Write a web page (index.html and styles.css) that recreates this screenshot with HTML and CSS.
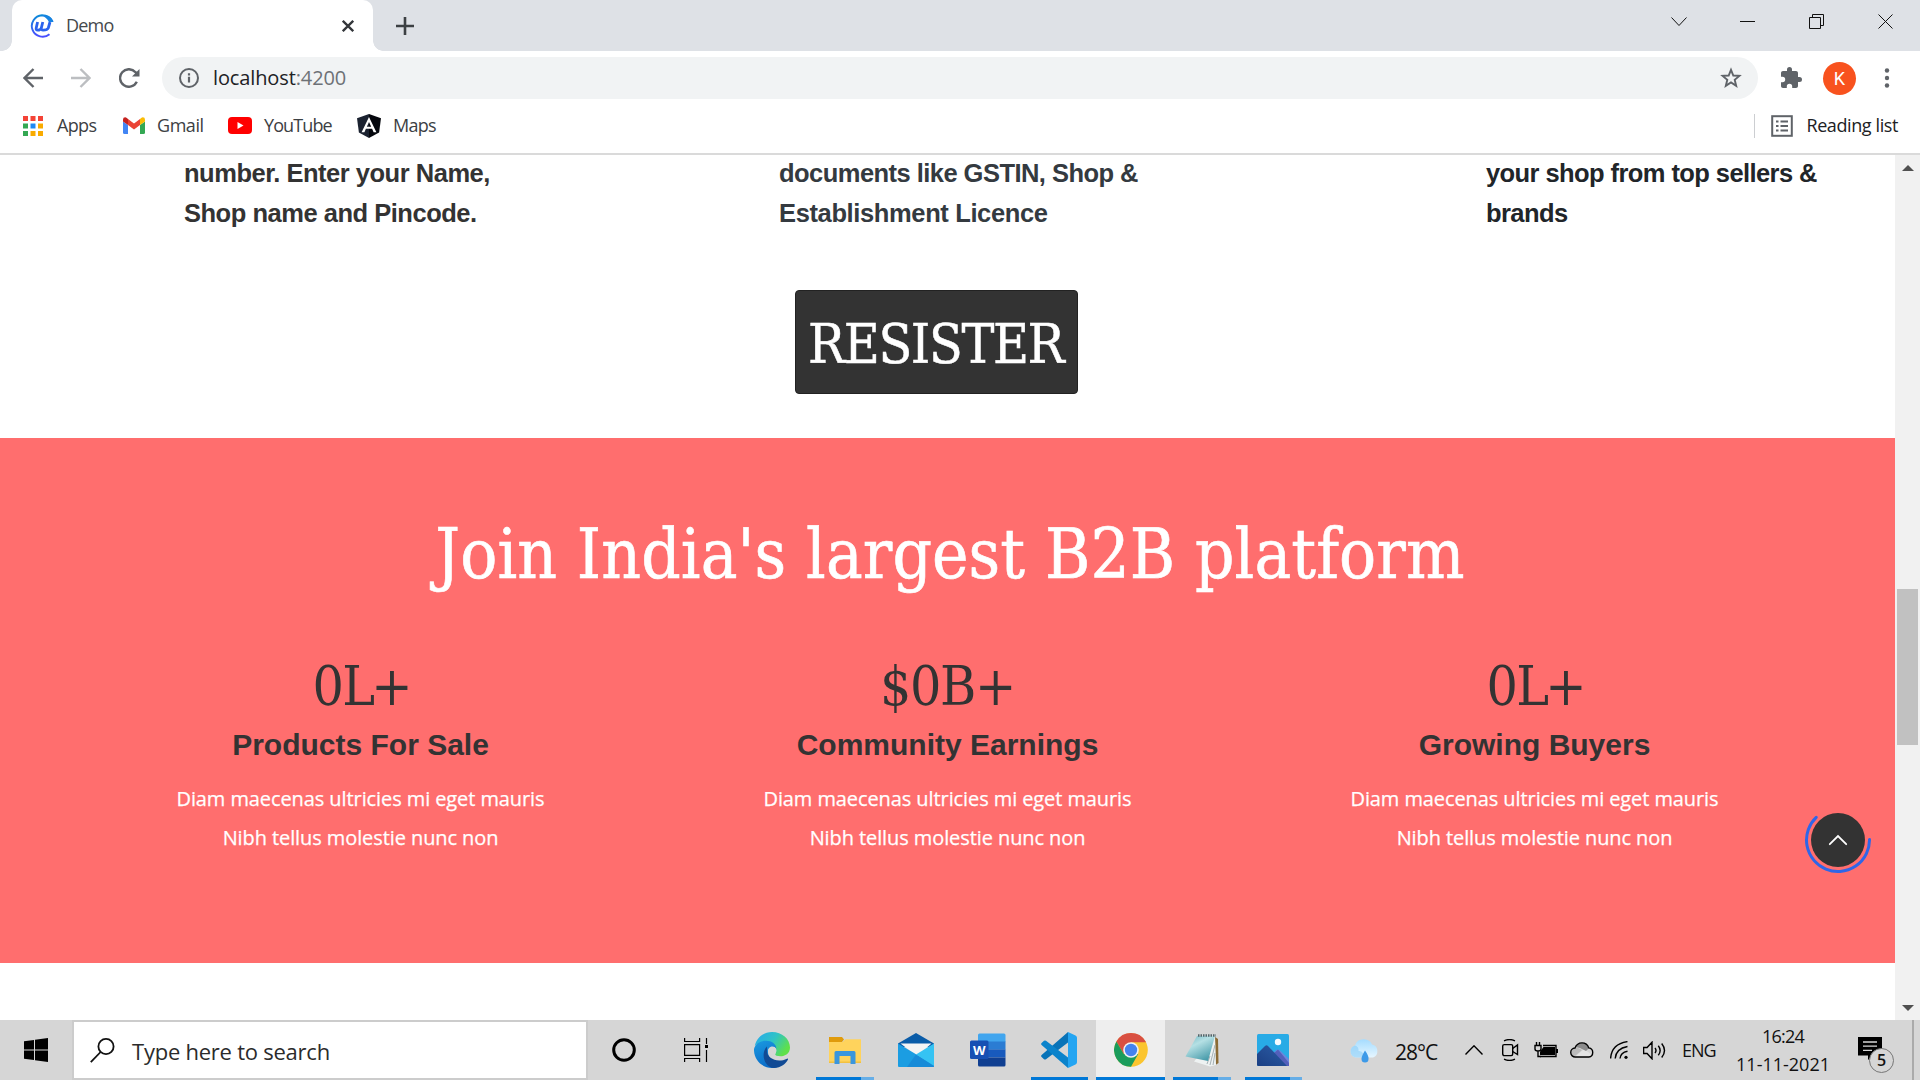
FILE: index.html
```html
<!DOCTYPE html>
<html lang="en">
<head>
<meta charset="utf-8">
<title>Demo</title>
<link rel="stylesheet" href="styles.css">
</head>
<body>
<div class="screen">

<header class="tabstrip">
  <div class="tab">
    <svg class="favicon" width="24" height="24" viewBox="0 0 24 24" fill="none">
      <defs><linearGradient id="fav" x1="0" y1="0" x2="0" y2="1"><stop offset="0" stop-color="#0a8ad8"/><stop offset="1" stop-color="#4a4dff"/></linearGradient></defs>
      <path d="M22.600 7.600C20.800 3.800 17 1.200 12 1.200A10.800 10.800 0 1 0 19.500 20.300" stroke="url(#fav)" stroke-width="1.900"/>
      <path d="M23.500 8H19C17 4.300 14.500 2.600 11 1.300C16 0.300 22 3 23.500 8Z" fill="#1683e2"/>
      <path d="M7.600 8L6.200 14Q5.800 16.200 7.800 16.200Q10.400 16.200 11.300 14L12.800 8M11.300 14Q11 16.200 13.200 16.200Q17.300 16.200 18.300 14L20 8" stroke="#2b63ee" stroke-width="2.800"/>
    </svg>
    <span class="tab-title">Demo</span>
    <svg class="tab-close" width="12" height="12" viewBox="0 0 12 12" stroke="#33363a" stroke-width="2.300"><path d="M.8.8l10.400 10.400M11.200.8L.8 11.200"/></svg>
  </div>
  <svg class="new-tab" width="18" height="18" viewBox="0 0 18 18" stroke="#3c4043" stroke-width="2.600"><path d="M9 0v18M0 9h18"/></svg>
  <div class="window-controls">
    <svg width="16" height="16" viewBox="0 0 16 16"><path d="M.5 3.500L8 11.500L15.500 3.500"/></svg>
    <svg width="16" height="16" viewBox="0 0 16 16"><path d="M0 7.500H15"/></svg>
    <svg width="16" height="16" viewBox="0 0 16 16"><path d="M.5 3.500h11v11h-11zM3.500 3.500v-3h11v11h-3"/></svg>
    <svg width="16" height="16" viewBox="0 0 16 16"><path d="M.5.5l14 14M14.500.5l-14 14"/></svg>
  </div>
</header>

<div class="toolbar">
  <svg class="nav-icon" width="20" height="20" viewBox="0 0 20 20" stroke="#5f6368"><path d="M20 10H1.500M10.500 1L1.500 10l9 9"/></svg>
  <svg class="nav-icon" width="20" height="20" viewBox="0 0 20 20" stroke="#bcbec1"><path d="M0 10H18.500M9.500 1l9 9l-9 9"/></svg>
  <svg class="nav-icon" width="22" height="20" viewBox="0 0 22 20" stroke="#5f6368"><path d="M17.800 13.800A8.800 8.800 0 1 1 16.500 4.200L18 5.700"/><path d="M20.500 1V8.500H13Z" fill="#5f6368" stroke="none"/></svg>
  <div class="omnibox">
    <svg width="20" height="20" viewBox="0 0 20 20" fill="none" stroke="#5f6368" stroke-width="2"><circle cx="10" cy="10" r="9"/><path d="M10 8.800v5.700M10 5.300v2.200" stroke-width="2.200"/></svg>
    <span class="url">localhost<span class="port">:4200</span></span>
    <svg class="star" width="22" height="22" viewBox="0 0 22 22" fill="none" stroke="#5f6368" stroke-width="1.900"><path d="M11 2.800l2.300 5.700l6.100.4l-4.700 3.900l1.500 6L11 15.500l-5.200 3.300l1.500-6L2.600 8.900l6.100-.4z"/></svg>
  </div>
  <svg class="puzzle" width="24" height="24" viewBox="0 0 24 24" fill="#5f6368"><path d="M20.500 11H19V7c0-1.100-.9-2-2-2h-4V3.500a2.500 2.500 0 0 0-5 0V5H4c-1.100 0-2 .9-2 2v3.800h1.500a2.700 2.700 0 0 1 0 5.400H2V20c0 1.100.9 2 2 2h3.800v-1.500a2.700 2.700 0 0 1 5.400 0V22H17c1.100 0 2-.9 2-2v-4h1.500a2.500 2.500 0 0 0 0-5z"/></svg>
  <span class="avatar">K</span>
  <svg class="dots" width="6" height="20" viewBox="0 0 6 20" fill="#5f6368"><circle cx="3" cy="2.500" r="2.200"/><circle cx="3" cy="10" r="2.200"/><circle cx="3" cy="17.500" r="2.200"/></svg>
</div>

<nav class="bookmarks">
  <a class="bookmark apps"><svg width="20" height="20" viewBox="0 0 20 20"><path fill="#f44336" d="M0 0h5v5H0zM7.500 0h5v5h-5zM15 0h5v5h-5z"/><path fill="#34a853" d="M0 7.500h5v5H0zM0 15h5v5H0z"/><path fill="#1e88f5" d="M7.500 7.500h5v5h-5z"/><path fill="#f9ab00" d="M15 7.500h5v5h-5zM7.500 15h5v5h-5zM15 15h5v5h-5z"/></svg><span>Apps</span></a>
  <a class="bookmark gmail"><svg width="22" height="17" viewBox="0 0 22 17"><path fill="#4285f4" d="M0 4.500L5 8v9H1.500Q0 17 0 15.500z"/><path fill="#34a853" d="M17 8l5-3.500v11q0 1.500-1.500 1.500H17z"/><path fill="#ea4335" d="M5 2l6 4.500L17 2v6l-6 4.500L5 8z"/><path fill="#c5221f" d="M0 2.500Q0 .3 2.200.3Q3 .3 3.800.9L5 2v6L0 4.500z"/><path fill="#fbbc04" d="M17 2l1.200-1.100Q19 .3 19.800.3Q22 .3 22 2.500v2L17 8z"/></svg><span>Gmail</span></a>
  <a class="bookmark youtube"><svg width="24" height="17" viewBox="0 0 24 17"><rect width="24" height="17" rx="4" fill="#f00"/><path fill="#fff" d="M9.500 5v7l6-3.500z"/></svg><span>YouTube</span></a>
  <a class="bookmark maps"><svg width="24" height="24" viewBox="0 0 24 24"><path fill="#1b2230" d="M12 0L0 4.200l1.900 14.300L12 24z"/><path fill="#05070d" d="M12 0l12 4.200l-1.900 14.300L12 24z"/><path fill="#fff" d="M12 3L4.600 18.200h2.800l1.500-3.500h6.200l1.500 3.500h2.800zM12 8l2.200 4.700H9.800z"/></svg><span>Maps</span></a>
  <a class="bookmark reading"><svg width="22" height="22" viewBox="0 0 22 22" fill="none" stroke="#5f6368" stroke-width="2"><rect x="1.200" y="1.200" width="19.600" height="19.600"/><path d="M5 6.500h2.500M5 11h2.500M5 15.500h2.500M9.500 6.500H17M9.500 11H17M9.500 15.500H17"/></svg><span>Reading list</span></a>
</nav>

<div class="viewport">
  <main class="page">
    <section class="steps">
      <p class="step step-one">number. Enter your Name,<br>Shop name and Pincode.</p>
      <p class="step step-two">documents like GSTIN, Shop &amp;<br><span class="second-line">Establishment Licence</span></p>
      <p class="step step-three">your shop from top sellers &amp;<br>brands</p>
    </section>
    <button class="register">RESISTER</button>
    <section class="stats">
      <h2 class="stats-heading">Join India's largest B2B platform</h2>
      <div class="stats-grid">
        <div class="stat"><div class="stat-number"><span class="zero">0</span>L+</div><h3>Products For Sale</h3><p>Diam maecenas ultricies mi eget mauris<br>Nibh tellus molestie nunc non</p></div>
        <div class="stat"><div class="stat-number wide">$0B+</div><h3>Community Earnings</h3><p>Diam maecenas ultricies mi eget mauris<br>Nibh tellus molestie nunc non</p></div>
        <div class="stat"><div class="stat-number"><span class="zero">0</span>L+</div><h3>Growing Buyers</h3><p>Diam maecenas ultricies mi eget mauris<br>Nibh tellus molestie nunc non</p></div>
      </div>
    </section>
    <a class="back-to-top"><svg width="68" height="68" viewBox="0 0 68 68" fill="none"><circle cx="34" cy="34" r="27" fill="#333"/><path d="M12.200 11.300A31.500 31.500 0 1 0 65.500 33.500" stroke="#2f66e8" stroke-width="3" stroke-linecap="round"/><path d="M25.800 38.200L34 30l8.200 8.200" stroke="#fff" stroke-width="1.800" stroke-linecap="round"/></svg></a>
  </main>
  <aside class="scrollbar">
    <svg width="12" height="6" viewBox="0 0 12 6"><path fill="#505050" d="M0 6L6 0l6 6z"/></svg>
    <div class="thumb"></div>
    <svg class="down" width="12" height="6" viewBox="0 0 12 6"><path fill="#505050" d="M0 0h12L6 6z"/></svg>
  </aside>
</div>

<footer class="taskbar">
  <div class="start"><svg width="24" height="24" viewBox="0 0 24 24"><path d="M0 3.300L10 2v9.500H0zM11 1.800L24 0v11.500H11zM0 12.500h10V22L0 20.800zM11 12.500h13V24L11 22.200z"/></svg></div>
  <div class="search">
    <svg width="25" height="25" viewBox="0 0 25 25" fill="none" stroke="#111" stroke-width="1.800"><circle cx="16" cy="8.500" r="7.600"/><path d="M10.600 14L.8 24.200"/></svg>
    <span>Type here to search</span>
  </div>
  <div class="system-cell"><svg width="26" height="26" viewBox="0 0 26 26"><circle cx="13" cy="13" r="10.300" fill="none" stroke="#000" stroke-width="3"/></svg></div>
  <div class="system-cell"><svg width="24" height="24" viewBox="0 0 24 24" fill="none" stroke="#000" stroke-width="1.200"><path d="M.6 0v3.500h15V0M.6 6.600h15v10.800H.6zM.6 24v-3.500h15V24M22.500 0v6M22.500 12v12"/><path fill="#000" stroke="none" d="M21 7h3v3h-3z"/></svg></div>

  <div class="apps-row">
    <div class="app shifted"><svg width="36" height="36" viewBox="0 0 36 36">
      <defs><linearGradient id="e1" x1="0" y1="0" x2="1" y2=".5"><stop offset="0" stop-color="#27a8ee"/><stop offset=".55" stop-color="#2fc3c6"/><stop offset="1" stop-color="#5fe04a"/></linearGradient><linearGradient id="e2" x1="0" y1="0" x2=".4" y2="1"><stop offset="0" stop-color="#1b9ae0"/><stop offset="1" stop-color="#0a6cc8"/></linearGradient></defs>
      <path fill="url(#e1)" d="M.8 14C3 5 10 0 18 0c10 0 18 7 18 15.500c0 6-5 8.800-9.500 8.800c-4 0-6-1.300-5.300-2.500c1-1.500 1.600-3 .8-5C20 11.500 8 8 .8 14z"/>
      <path fill="url(#e2)" d="M0 17C1.500 11 7 8.800 12 8.800c6 0 10.500 3.700 10.300 8c-2-4-8.300-3-8.300 2.700C14 26 19 33 25 34.300C22 36 19 36 18 36C7.500 36-.5 27 0 17z"/>
      <path fill="#114a94" d="M13 14.500C6 21 10.500 36 20 36c7 0 12-4.500 14-8.500c.3-.8-.4-1.200-1-.8C23 31.500 13 26 13 19z"/>
      <path fill="#d6d6d6" d="M22 17c-.8-3-8-3-8 2c0 5 6 9 12 7.500c-3-.4-5.800-2.300-4.700-4.500c.8-1.500 1.200-3 .7-5z"/></svg></div>
    <div class="app running multi"><svg width="32" height="27" viewBox="0 0 32 27"><path fill="#e09b0c" d="M0 0h13l2 2.500L13 5H0z"/><path fill="#ffd35c" d="M0 5h13.500l3-2.700H32V25q0 1-1 1H1q-1 0-1-1z"/><path fill="#f3c13f" d="M0 24.500h32V26H0z"/><path fill="#3a96dd" d="M5.500 27V15.500q0-1.500 1.500-1.500h18q1.500 0 1.500 1.500V27h-5v-8h-11v8z"/></svg></div>
    <div class="app"><svg width="36" height="34" viewBox="0 0 36 34"><path fill="#0a5ca8" d="M0 10.500L18 0l18 10.500V14H0z"/><path fill="#f4f4f4" d="M2.500 10.500h31L19 23z"/><path fill="#1b9de2" d="M0 10.500L36 32v1q0 1-1 1H1q-1 0-1-1z"/><path fill="#35c3f3" d="M36 10.500L18 21.500L36 33z"/><path fill="#1583d4" d="M18 21.500L36 33v1H9z" opacity=".7"/></svg></div>
    <div class="app"><svg width="36" height="34" viewBox="0 0 36 34"><path fill="#41a5ee" d="M8 9V2q0-1.500 1.500-1.500h24.500Q35.500.5 35.500 2v7z"/><path fill="#2b7cd3" d="M8 8.500h27.500v8.200H8z"/><path fill="#185abd" d="M8 16.500h27.500v8H8z"/><path fill="#103f91" d="M8 24.500h27.500V32q0 1.500-1.500 1.500H9.500Q8 33.500 8 32z"/><rect y="7.500" width="18.500" height="18.500" rx="1.500" fill="#1750b3"/><text class="word-letter" x="9.200" y="21.800" text-anchor="middle" fill="#fff">W</text></svg></div>
    <div class="app running"><svg width="36" height="36" viewBox="0 0 36 36"><path fill="#0873b8" d="M27 0v10.500L5 27.200q-1 .8-2 0L.6 25q-1-1 0-2z"/><path fill="#0b83cb" d="M27 36V25.500L5 8.800q-1-.8-2 0L.6 11q-1 1 0 2z"/><path fill="#24a5f2" d="M27 0l7.500 3.500Q36 4.200 36 5.800v24.400q0 1.600-1.500 2.300L27 36z"/></svg></div>
    <div class="app running active"><svg width="34" height="34" viewBox="0 0 34 34"><circle cx="17" cy="17" r="16.800" fill="#fbc52f"/><path fill="#d94f41" d="M2.400 8.600A16.800 16.800 0 0 1 31.600 8.600L32 9.200H17L9.800 21z"/><path fill="#1a9c5b" d="M2.400 8.600A16.800 16.800 0 0 0 17 33.800L24.200 21H9.800z"/><circle cx="17" cy="17" r="7.800" fill="#f1f1f1"/><circle cx="17" cy="17" r="6.200" fill="#4583ee"/></svg></div>
    <div class="app running multi"><svg width="34" height="34" viewBox="0 0 34 34"><defs><linearGradient id="np" x1="0" y1="0" x2=".6" y2="1"><stop offset="0" stop-color="#6fb6c2"/><stop offset=".4" stop-color="#b5e0e4"/><stop offset="1" stop-color="#4a9dac"/></linearGradient></defs><path fill="#8b6b35" d="M30 4l3 2l.5 24l-3 2z"/><path fill="#eef2f2" d="M30 3l1 29l-6 1.500l-16-5z"/><path stroke="#a5b1b5" d="M25 32l5-20M28 32l2-12M22 31l3-8" fill="none"/><path fill="url(#np)" d="M12 3h18l-7 25L.5 23.500z"/><path stroke="#53666b" stroke-width="2.500" stroke-dasharray="1.500 1" d="M13 2.500h18"/></svg></div>
    <div class="app running multi"><svg width="32" height="32" viewBox="0 0 32 32"><defs><linearGradient id="ph" x1="0" y1="1" x2="1" y2="0"><stop offset="0" stop-color="#1b3f83"/><stop offset="1" stop-color="#2c5ea8"/></linearGradient></defs><rect width="32" height="32" rx="1.500" fill="#28abe6"/><path fill="#6b86dd" d="M12 23l7.500-7q1.500-1.200 3 0L32 25v7H14z"/><path fill="#5360bb" d="M16 20l5-4.500L32 29v3H20z"/><path fill="url(#ph)" d="M0 20l8-8q1.500-1.500 3 0l19 20H1.500Q0 32 0 30.500z"/><circle cx="21" cy="8" r="3.200" fill="#f5fbff"/></svg></div>
  </div>

  <div class="tray">
    <svg class="weather" width="31" height="24" viewBox="0 0 31 24"><defs><linearGradient id="wc" x1="0" y1="0" x2="0" y2="1"><stop offset="0" stop-color="#a5dcff"/><stop offset="1" stop-color="#e6f6ff"/></linearGradient></defs><path fill="url(#wc)" d="M6.500 18.500a6.200 6.200 0 0 1-.5-12Q8 0 15 .3q6 .2 8 5.200a6.800 6.800 0 0 1 1 13z"/><path fill="#8acdf7" d="M6.500 18.500a6.200 6.200 0 0 1-.5-12q4 1 3.500 5.500q5-.5 6 6.500z" opacity=".6"/><path fill="#3d9ae8" d="M16 11.500q4 5.500 3.500 8.500a3.500 3.500 0 0 1-7 0Q12.500 17 16 11.500z"/></svg>
    <span class="temperature">28°C</span>
    <svg class="caret" width="18" height="10" viewBox="0 0 18 10"><path d="M.5 9.500L9 .8l8.500 8.700"/></svg>
    <svg class="camera" width="17" height="22" viewBox="0 0 17 22"><rect x=".7" y="5.600" width="10" height="11" rx="1.500"/><path d="M10.700 9.500L15.500 6v9.500l-4.800-3M2 1.800Q7.500-.7 13 1.800M2 20.200Q7.500 22.700 13 20.200"/></svg>
    <svg class="battery" width="24" height="16" viewBox="0 0 24 16"><path d="M9 3.500h13v11H6M23.400 7v4"/><path fill="#000" stroke="none" d="M9.500 5H21v8H6V9.500z"/><path fill="#d6d6d6" d="M1 3.500h6V7q0 2-3 2t-3-2zM2.500 0v3.500M5.500 0v3.500M4 9v5.500h3"/></svg>
    <svg class="cloud" width="24" height="16" viewBox="0 0 24 16"><path fill="#e5e5e5" stroke="none" d="M5 15L14 7l8 6l-2 2z"/><path fill="#8b8b8b" stroke="none" d="M5.500 5Q8 1 12 1t7 5l-3 3l-6-3z"/><path fill="#bababa" stroke="none" d="M1 11q0-4 5-6l6 3l-7 6q-4 0-4-3z"/><path d="M5.500 15a4.400 4.400 0 0 1-.5-9Q7 .9 12 .9t6.800 5a4.600 4.600 0 0 1 0 9.100z"/></svg>
    <svg class="wifi" width="18" height="18" viewBox="0 0 18 18"><path d="M.6 17.500Q1.500 3 17.500.6M5.200 17.500Q6 7.500 17.500 5.500M10 17.500Q10.500 11.500 17.500 10.200"/><circle cx="16" cy="16.300" r="1.600" fill="#000" stroke="none"/></svg>
    <svg class="speaker" width="23" height="19" viewBox="0 0 23 19"><path d="M.6 6.500h3.500L9 1.200v16.600l-4.900-5.300H.6zM12 7q2 2.500 0 5M15.300 4.800q3.700 4.700 0 9.400M18.700 2.500q5.600 7 0 14"/></svg>
    <span class="language">ENG</span>
    <div class="clock"><span class="time">16:24</span><span class="date">11-11-2021</span></div>
    <div class="notifications"><svg width="24" height="24" viewBox="0 0 24 24"><path d="M0 0h24v18.500h-9.500L10 23v-4.500H0z"/><path stroke="#d6d6d6" stroke-width="1.300" d="M5 5h14M5 9.200h14M5 13.400h9"/></svg><span class="badge">5</span></div>
    <div class="show-desktop"></div>
  </div>
</footer>
</div>
</body>
</html>
```
FILE: styles.css
```css
* { box-sizing: border-box; }
body { margin: 0; background: #fff; font-family: "Open Sans", "Noto Sans", sans-serif; color: #333; }
h2, h3, p { margin: 0; }
svg { display: block; flex: none; }
.screen { width: 1920px; height: 1080px; display: flex; flex-direction: column; overflow: hidden; }

/* Tab strip */
.tabstrip { height: 51px; flex: none; display: flex; align-items: flex-start; background: #dee1e6; padding-left: 12px; }
.tab { position: relative; width: 361px; height: 51px; display: flex; align-items: center; padding: 1px 19px 0 18px; background: #fff; border-radius: 10px 10px 0 0; }
.tab::before, .tab::after { content: ""; position: absolute; bottom: 0; width: 10px; height: 10px; }
.tab::before { left: -10px; background: radial-gradient(circle at 0 0, transparent 9.500px, #fff 10px); }
.tab::after { right: -10px; background: radial-gradient(circle at 100% 0, transparent 9.500px, #fff 10px); }
.tab-title { margin: -2px 0 0 12px; font-size: 18px; line-height: 24px; letter-spacing: -0.780px; color: #45494d; }
.tab-close { margin-left: auto; }
.new-tab { margin: 17px 0 0 23px; }
.window-controls { margin: 14px 26px 0 auto; display: flex; gap: 53px; fill: none; stroke: #111; stroke-width: 1; }

/* Address bar */
.toolbar { height: 54px; flex: none; display: flex; align-items: center; padding: 0 30px 0 23px; }
.nav-icon { margin-right: 28px; fill: none; stroke-width: 2.400; }
.nav-icon:nth-of-type(3) { margin-right: 21px; }
.omnibox { width: 1596px; height: 42px; display: flex; align-items: center; background: #f1f3f4; border-radius: 21px; padding: 0 16px 0 17px; }
.url { margin: 0 auto 0 14px; font-size: 20px; line-height: 26px; letter-spacing: -0.120px; color: #202124; }
.port { color: #6d7176; }
.puzzle { margin-left: 21px; }
.avatar { width: 33px; height: 33px; margin: 1px 0 0 20px; border-radius: 50%; background: #f8521e; color: #fff; font: 18px/33px Roboto, "Open Sans", sans-serif; text-align: center; }
.dots { margin-left: 28px; }

/* Bookmarks */
.bookmarks { height: 50px; flex: none; display: flex; align-items: center; padding: 0 22px 7px 23px; border-bottom: 2px solid #dadada; }
.bookmark { display: flex; align-items: center; font-size: 18px; line-height: 24px; color: #3c4043; letter-spacing: -0.640px; }
.bookmark span { margin-top: -1px; }
.apps { width: 100px; gap: 14px; }
.gmail { width: 105px; gap: 12px; letter-spacing: -0.450px; }
.youtube { width: 129px; gap: 12px; letter-spacing: -0.900px; }
.maps { gap: 12px; letter-spacing: -0.730px; }
.reading { margin-left: auto; height: 24px; padding-left: 16px; gap: 13px; border-left: 1px solid #ccced1; letter-spacing: -0.400px; color: #202124; }

/* Page */
.viewport { height: 865px; flex: none; display: flex; overflow: hidden; }
.page { position: relative; width: 1895px; flex: none; }
.steps { display: grid; grid-template-columns: 595px 707px 1fr; margin-top: -2px; padding-left: 184px; }
.step { font: bold 25.500px/40px "Liberation Sans", Arial, sans-serif; white-space: nowrap; }
.step-one { letter-spacing: -0.480px; color: #333; }
.step-two { letter-spacing: -0.540px; color: #343a40; }
.second-line { letter-spacing: -0.370px; }
.step-three { letter-spacing: -0.580px; color: #212529; }
.register { display: block; width: 283px; height: 104px; margin: 57px 0 44px 795px; padding: 4px 0 0 12px; text-align: left; background: #333; border: 1px solid #222; border-radius: 4px; color: #fff; font: 54.900px "DejaVu Serif Condensed", "DejaVu Serif", serif; letter-spacing: -1.400px; white-space: nowrap; -webkit-text-stroke: 0.500px; }
.stats { height: 525px; padding: 71px 67px 0; background: #ff6e6e; text-align: center; }
.stats-heading { padding-left: 5px; font: 68.600px/90px "DejaVu Serif Condensed", "DejaVu Serif", serif; letter-spacing: 0.110px; color: #fff; -webkit-text-stroke: 0.600px; }
.stats-grid { display: grid; grid-template-columns: repeat(3, 1fr); margin-top: 57px; }
.stat-number { font: 54.900px/60px "DejaVu Serif Condensed", "DejaVu Serif", serif; letter-spacing: -4px; }
.zero { letter-spacing: -1.500px; }
.stat-number.wide { letter-spacing: -1.370px; }
.stat h3 { margin-top: 11px; font: bold 30px/36px "Liberation Sans", Arial, sans-serif; }
.stat p { margin-top: 16px; font-size: 20px; line-height: 39px; letter-spacing: -0.090px; color: #fff; -webkit-text-stroke: 0.250px; }
.back-to-top { position: absolute; right: 23px; top: 651px; }

.scrollbar { width: 25px; display: flex; flex-direction: column; align-items: center; padding: 10px 0 9px; background: #f1f1f1; }
.thumb { width: 21px; height: 156px; margin-top: 418px; background: #c1c1c1; }
.down { margin-top: auto; }

/* Taskbar */
.taskbar { height: 60px; flex: none; display: flex; background: #d6d6d6; color: #111; }
.start { width: 72px; display: flex; align-items: center; justify-content: center; }
.search { width: 516px; display: flex; align-items: center; padding-left: 16px; background: #fff; border: 2px solid #ccc; font-size: 22px; letter-spacing: -0.240px; color: #2b2b2b; }
.search span { margin: 1px 0 0 17px; }
.system-cell { width: 72px; display: flex; align-items: center; justify-content: center; }
.apps-row { width: 571px; margin-left: 6px; display: grid; grid-template-columns: repeat(8, 1fr); }
.app { position: relative; display: flex; align-items: center; justify-content: center; }
.shifted { padding-right: 3px; }
.running::after { content: ""; position: absolute; left: 7px; right: 7px; bottom: 0; height: 3px; background: #0078d7; }
.multi::after { background: linear-gradient(90deg, #0078d7 45px, #66aee7 45px); }
.active { background: #eee; margin: 0 1px; }
.active::after { left: 0; right: 0; }
.word-letter { font: bold 13px "Open Sans", sans-serif; }

.tray { flex: 1; display: flex; align-items: center; padding-left: 40px; }
.tray > svg { fill: none; stroke: #000; stroke-width: 1.400; }
.tray > .weather { stroke: none; margin-top: 1px; }
.temperature { width: 42px; margin: 3px 0 0 15px; font-size: 21px; letter-spacing: -1px; white-space: nowrap; }
.caret { margin-left: 28px; }
.camera { margin-left: 19px; }
.battery { margin-left: 15px; }
.cloud { margin-left: 12px; }
.wifi { margin-left: 16px; }
.speaker { margin-left: 15px; }
.language { width: 34px; margin-left: 16px; font-size: 18px; letter-spacing: -1.030px; }
.clock { width: 92px; margin-left: 21px; display: flex; flex-direction: column; align-items: center; font-size: 18px; line-height: 28px; white-space: nowrap; }
.time { letter-spacing: -0.780px; }
.notifications { position: relative; margin: -2px 0 0 29px; }
.badge { position: absolute; left: 11px; top: 11px; width: 25px; height: 25px; border: 1px solid #777; border-radius: 50%; background: #d6d6d6; font: 600 16px/22px "Open Sans", sans-serif; text-align: center; }
.show-desktop { width: 8px; height: 60px; margin-left: auto; border-left: 2px solid #aaa; }
```
